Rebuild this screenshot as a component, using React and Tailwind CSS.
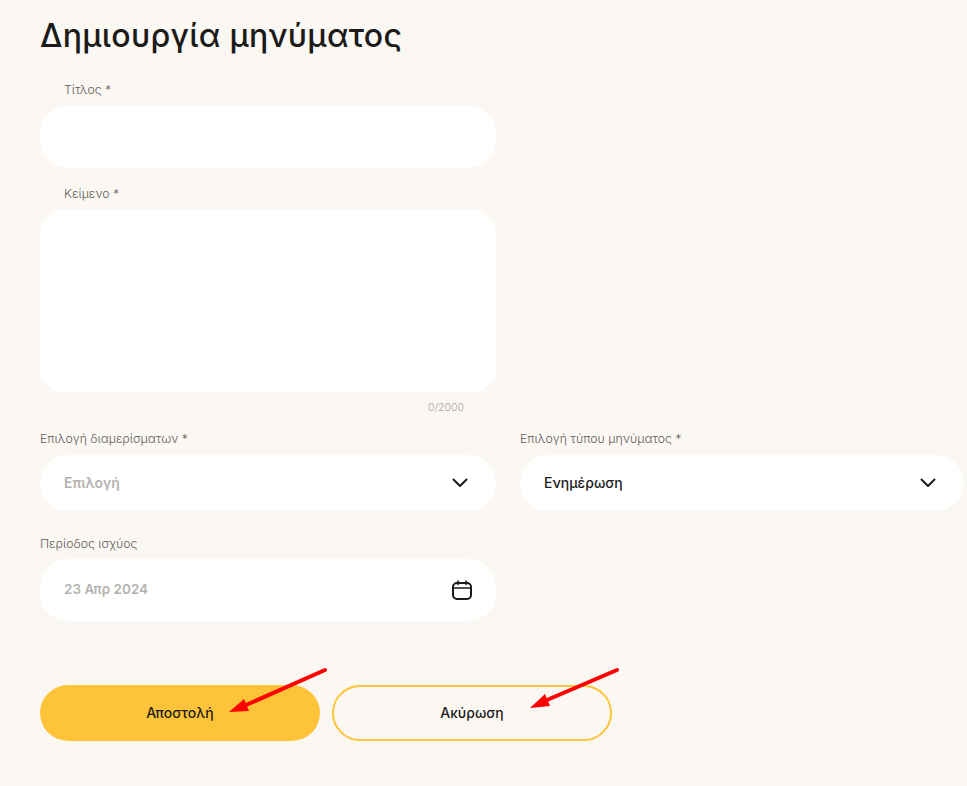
import React from 'react';

function Label({ children, className = '' }) {
  return <label className={`block text-[12.3px] leading-4 font-light text-[#5f5d59] ${className}`}>{children}</label>;
}

function Chevron() {
  return (
    <svg width="16" height="10" viewBox="0 0 16 10" fill="none" stroke="#1c1b1a" strokeWidth="2" strokeLinecap="round" strokeLinejoin="round">
      <path d="M1.5 1.5 8 8l6.5-6.5" />
    </svg>
  );
}

function CalendarIcon() {
  return (
    <svg width="20" height="20" viewBox="0 0 20 20" fill="none" stroke="#1c1b1a" strokeWidth="2" strokeLinecap="round">
      <rect x="1" y="3" width="18" height="16" rx="4" />
      <path d="M1 8h18" strokeWidth="1.5" />
      <path d="M6 1v3.5M14 1v3.5" strokeWidth="1.6" />
    </svg>
  );
}

export default function App() {
  return (
    <div className="relative min-h-[786px] bg-[#fbf8f4] pl-10 font-['Inter','Noto_Sans',sans-serif] text-[#1c1b1a] overflow-hidden">
      <h1 className="pt-[15px] h-[82px] text-[32px] leading-[42px] font-medium tracking-[0.3px]">Δημιουργία μηνύματος</h1>

      <Label className="pl-6 mb-2">Τίτλος *</Label>
      <input className="block w-[456px] h-[62px] rounded-[28px] bg-white px-6 outline-none" />

      <Label className="pl-6 mt-[18px] mb-2">Κείμενο *</Label>
      <textarea className="block w-[456px] h-[182px] rounded-[24px] bg-white px-6 py-4 outline-none resize-none" />
      <div className="w-[424px] mt-[10px] h-3 text-right text-[10.5px] leading-3 font-light text-[#a9a7a3]">0/2000</div>

      <div className="flex gap-6 mt-[17px]">
        <div className="w-[456px]">
          <Label className="mb-2">Επιλογή διαμερίσματων *</Label>
          <div className="flex items-center justify-between h-14 rounded-[28px] bg-white pl-6 pr-[28px] text-sm font-semibold text-[#b5b3af]">
            <span>Επιλογή</span>
            <Chevron />
          </div>
        </div>
        <div className="w-[444px]">
          <Label className="mb-2">Επιλογή τύπου μηνύματος *</Label>
          <div className="flex items-center justify-between h-14 rounded-[28px] bg-white pl-6 pr-[28px] text-sm font-medium">
            <span>Ενημέρωση</span>
            <Chevron />
          </div>
        </div>
      </div>

      <div className="w-[456px] mt-[25px]">
        <Label className="mb-[7px]">Περίοδος ισχύος</Label>
        <div className="flex items-center justify-between h-[62px] rounded-[28px] bg-white pl-6 pr-6 text-[13.5px] font-semibold text-[#b5b3af]">
          <span className="pb-[2px]">23 Απρ 2024</span>
          <CalendarIcon />
        </div>
      </div>

      <div className="flex gap-3 mt-16">
        <button className="w-[280px] h-14 rounded-[28px] bg-[#fdc439] text-sm font-medium">Αποστολή</button>
        <button className="w-[280px] h-14 rounded-[28px] border-2 border-[#fdc439] text-sm font-medium">Ακύρωση</button>
      </div>

      {/* red annotation arrows over the buttons */}
      <svg className="absolute left-[228px] top-[667px] pointer-events-none" width="100" height="50" viewBox="0 0 100 50" fill="none">
        <path d="M97 3 L18 38" stroke="#ff0000" strokeWidth="4" strokeLinecap="round" />
        <path d="M1 45 L16 32 L21 44 Z" fill="#ff0000" />
      </svg>
      <svg className="absolute left-[529px] top-[667px] pointer-events-none" width="100" height="50" viewBox="0 0 100 50" fill="none">
        <path d="M88 3 L18 33" stroke="#ff0000" strokeWidth="4" strokeLinecap="round" />
        <path d="M1 41 L16 27 L21 39 Z" fill="#ff0000" />
      </svg>
    </div>
  );
}
